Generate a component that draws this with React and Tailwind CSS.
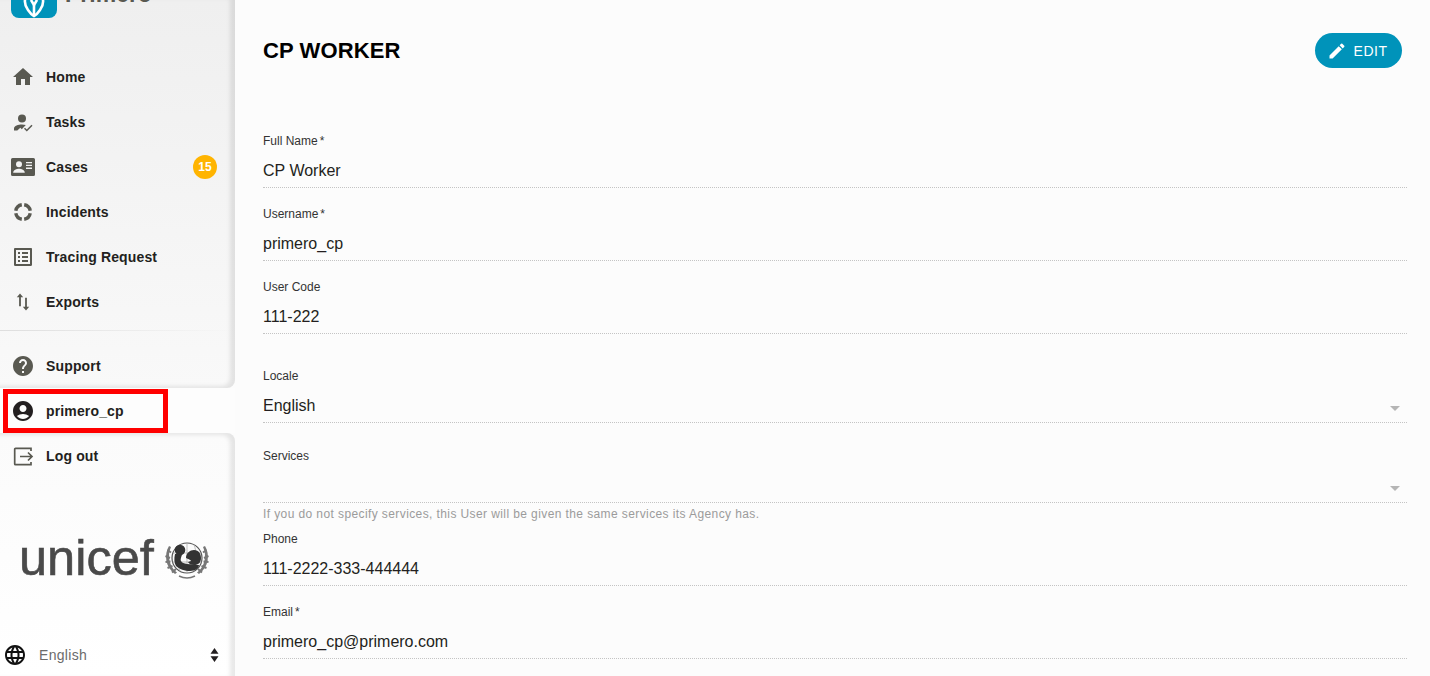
import { MdHome, MdHelp, MdAccountCircle, MdLanguage, MdEdit, MdArrowDropDown, MdListAlt } from "react-icons/md";

function TasksIcon() {
  return (
    <svg viewBox="0 0 24 24" className="w-6 h-6" fill="currentColor">
      <circle cx="11" cy="8.500" r="4" />
      <path d="M3 20.500v-2c0-2.600 4.300-4 8-4 1.300 0 2.600.2 3.800.5l-4 4.200-1.500-1.400-3 2.700z" />
      <path d="M13.500 18.300l2.300 2.200 5.200-5.200" fill="none" stroke="currentColor" strokeWidth="1.500" />
    </svg>
  );
}

function CasesIcon() {
  return (
    <svg viewBox="0 0 24 18" className="w-6 h-[18px]" fill="currentColor">
      <path fillRule="evenodd" d="M1.500 0h21A1.500 1.500 0 0 1 24 1.500v15a1.500 1.500 0 0 1-1.500 1.500h-21A1.500 1.500 0 0 1 0 16.500v-15A1.500 1.500 0 0 1 1.500 0zM15 4v1.300h6V4zM15 6.800v1.300h6V6.800zM15 9.600v1.300h6V9.600zM8 3.200a3 3 0 1 0 0 6 3 3 0 0 0 0-6zM2.200 14.800h11.600c0-2.600-3.400-4-5.800-4s-5.800 1.400-5.800 4z" />
    </svg>
  );
}

function IncidentsIcon() {
  return (
    <svg viewBox="0 0 24 24" className="w-6 h-6" fill="none" stroke="currentColor" strokeWidth="3.400">
      <path d="M10.800 4.800a7.300 7.300 0 0 0-6 6" />
      <path d="M13.200 4.800a7.300 7.300 0 0 1 6 6" />
      <path d="M19.200 13.200a7.300 7.300 0 0 1-6 6" />
      <path d="M10.800 19.200a7.300 7.300 0 0 1-6-6" />
    </svg>
  );
}

function ExportsIcon() {
  return (
    <svg viewBox="0 0 24 24" className="w-6 h-6" fill="currentColor">
      <path d="M9 3.500l3.200 3.700h-2.300v9H8.100v-9H5.800z" />
      <path d="M15 20.500l-3.200-3.700h2.300v-9h1.800v9h2.300z" />
    </svg>
  );
}

function LogoutIcon() {
  return (
    <svg viewBox="0 0 24 24" className="w-6 h-6" fill="none" stroke="currentColor" strokeWidth="1.700">
      <path d="M20 7V4.300H4.500a.8.8 0 0 0-.8.8v14.800a.8.8 0 0 0 .8.8H20V18" />
      <path d="M9 12.500h12M17 8.500l4 4-4 4" />
    </svg>
  );
}

function UnicefEmblem() {
  return (
    <svg viewBox="0 0 46 40" className="w-[46px] h-10 shrink-0">
      <circle cx="23" cy="19" r="15" fill="#fbfbfb" stroke="#555" strokeWidth="1.200" />
      <path d="M9 14h28M8.500 23h29M23 4v30M16 5.500c-3 8-3 19 0 27M30 5.500c3 8 3 19 0 27" fill="none" stroke="#a5a5a5" strokeWidth="0.700" />
      <circle cx="16" cy="11" r="5.300" fill="#333" />
      <path d="M11 15c-1 4-1 9 1 12 3 3 9 5 14 5 5 0 9-3 9-6l-12-1c-3-1-5-1-6-3-1-2 1-5 1-7z" fill="#333" />
      <path d="M22 19c0-5 4-8 8-8 5 0 7 4 7 8 0 5-3 7-7 7-3 0-5-1-6-3l3-1c0-1-3-2-5-3z" fill="#333" />
      <path d="M5 7C0 15 1 28 11 35l2-1.500C5 28 3 16 7 8zM41 7c5 8 4 21-6 28l-2-1.500C41 28 43 16 39 8z" fill="#777" />
      <path d="M3.500 11l3.500 2.500M1.500 17l4.500 2M1.500 23l5-.5M3.500 29l5-2M8 33.500l4-3.500M42.500 11L39 13.500M44.500 17L40 19M44.500 23l-5-.5M42.500 29l-5-2M38 33.500L34 30" stroke="#777" strokeWidth="2" />
      <path d="M15 37c5 2.500 11 2.500 16 0" fill="none" stroke="#777" strokeWidth="1.500" />
    </svg>
  );
}

function NavItem({ icon, label, badge }) {
  return (
    <div className="h-[45px] flex items-center pl-[11px] pr-[18px]">
      <span className="w-6 h-6 flex items-center justify-center text-[#595951] shrink-0">{icon}</span>
      <span className="ml-[11px] text-sm font-bold tracking-[0.15px] text-[#231f20]">{label}</span>
      {badge && (
        <span className="ml-auto w-6 h-6 rounded-full bg-[#ffb400] text-white text-xs font-bold flex items-center justify-center">
          {badge}
        </span>
      )}
    </div>
  );
}

function Sidebar() {
  return (
    <aside className="w-[235px] h-full shrink-0 flex flex-col overflow-hidden">
      <div className="bg-gradient-to-b from-[#efefef] to-[#f9f9f9] rounded-br-lg shadow-[inset_-5px_-2px_4px_rgba(0,0,0,0.09)] h-[388px] flex flex-col">
        <div className="h-[54px] flex items-end pl-[11px] overflow-hidden shrink-0">
          <div className="flex items-end mb-[36px]">
            <div className="w-[46px] h-[46px] rounded-lg bg-[#0093ba] flex items-start justify-center shrink-0 overflow-hidden">
              <svg viewBox="0 0 22 24" className="w-[22px] h-6 mt-[22px]" fill="none" stroke="white" strokeWidth="2.600">
                <path d="M3 2c-2 5-1 10 2 14 2 3 4 5 6 6 2-1 4-3 6-6 3-4 4-9 2-14" />
                <path d="M11 22V12c0-2-2-4-3-6M11 12c0-2 2-4 3-6" />
              </svg>
            </div>
            <span className="ml-2 text-[23px] leading-none font-bold text-[#595951] mb-[12px]">Primero</span>
          </div>
        </div>
        <NavItem icon={<MdHome size={24} />} label="Home" />
        <NavItem icon={<TasksIcon />} label="Tasks" />
        <NavItem icon={<CasesIcon />} label="Cases" badge="15" />
        <NavItem icon={<IncidentsIcon />} label="Incidents" />
        <NavItem icon={<MdListAlt size={24} />} label="Tracing Request" />
        <NavItem icon={<ExportsIcon />} label="Exports" />
        <div className="mt-[6px] h-px bg-gradient-to-r from-[#dedede] to-transparent" />
        <div className="h-[12px]" />
        <NavItem icon={<MdHelp size={24} />} label="Support" />
      </div>

      <div className="relative h-[45px] bg-[#fdfdfd] shrink-0">
        <div className="h-[45px] flex items-center pl-[11px]">
          <span className="w-6 h-6 flex items-center justify-center text-[#231f20]"><MdAccountCircle size={24} /></span>
          <span className="ml-[11px] text-sm font-bold tracking-[0.15px] text-[#231f20]">primero_cp</span>
        </div>
        <div className="absolute left-[3px] top-[1px] w-[165px] h-[44px] border-[5px] border-[#ff0000]" />
      </div>

      <div className="flex-1 flex flex-col bg-gradient-to-b from-[#fbfbfb] to-[#ffffff] rounded-tr-lg shadow-[inset_-5px_2px_4px_rgba(0,0,0,0.09)]">
        <NavItem icon={<LogoutIcon />} label="Log out" />
        <div className="mt-[55px] flex items-center pl-[19px]">
          <span className="text-[50.500px] leading-none text-[#4a4a4a] [-webkit-text-stroke:0.6px_#4a4a4a]">unicef</span>
          <span className="ml-[10px] mt-[2px]"><UnicefEmblem /></span>
        </div>
        <div className="mt-auto h-[42px] flex items-center pl-[3px] pr-[15px]">
          <MdLanguage size={24} className="text-[#111]" />
          <span className="ml-3 text-sm tracking-[0.3px] text-[#6b6b6b]">English</span>
          <svg viewBox="0 0 10 18" className="ml-auto w-[11px] h-[16px]" fill="#231f20">
            <path d="M5 1l4.500 6.500h-9zM5 17L.5 10.500h9z" />
          </svg>
        </div>
      </div>
    </aside>
  );
}

function Field({ label, required, value, select, hint, className }) {
  return (
    <div className={className}>
      <div className="text-xs leading-[14px] text-[#333333]">
        {label}
        {required && <span className="ml-[2px]">*</span>}
      </div>
      <div className="mt-[13px] h-[24px] pb-[2px] flex items-center border-b border-dotted border-[#c4c4c4] box-content text-base text-[#231f20]">
        <span className="flex-1 -mt-1">{value}</span>
        {select && <MdArrowDropDown size={24} className="text-[#b5b5b5]" />}
      </div>
      {hint && <div className="mt-[4px] text-xs leading-[14px] tracking-[0.4px] text-[#9b9b9b]">{hint}</div>}
    </div>
  );
}

export default function App() {
  return (
    <div className="w-[1430px] h-[676px] flex overflow-hidden bg-[#fcfcfc] font-['Liberation_Sans',Arial,sans-serif]">
      <Sidebar />
      <main className="flex-1 pl-[28px] pr-[23px] overflow-hidden">
        <div className="flex items-center justify-between pt-[33px] pr-[5px]">
          <h1 className="text-[22px] font-bold tracking-[0.1px] text-black">CP WORKER</h1>
          <button className="h-[35px] w-[87px] pr-[3px] rounded-full bg-[#0093ba] text-white flex items-center justify-center gap-[7px] text-sm tracking-[0.5px]">
            <MdEdit size={20} />
            EDIT
          </button>
        </div>
        <Field className="mt-[66px]" label="Full Name" required value="CP Worker" />
        <Field className="mt-[19px]" label="Username" required value="primero_cp" />
        <Field className="mt-[19px]" label="User Code" value="111-222" />
        <Field className="mt-[35px]" label="Locale" value="English" select />
        <Field className="mt-[26px]" label="Services" value="" select hint="If you do not specify services, this User will be given the same services its Agency has." />
        <Field className="mt-[11px]" label="Phone" value="111-2222-333-444444" />
        <Field className="mt-[19px]" label="Email" required value="primero_cp@primero.com" />
      </main>
    </div>
  );
}
